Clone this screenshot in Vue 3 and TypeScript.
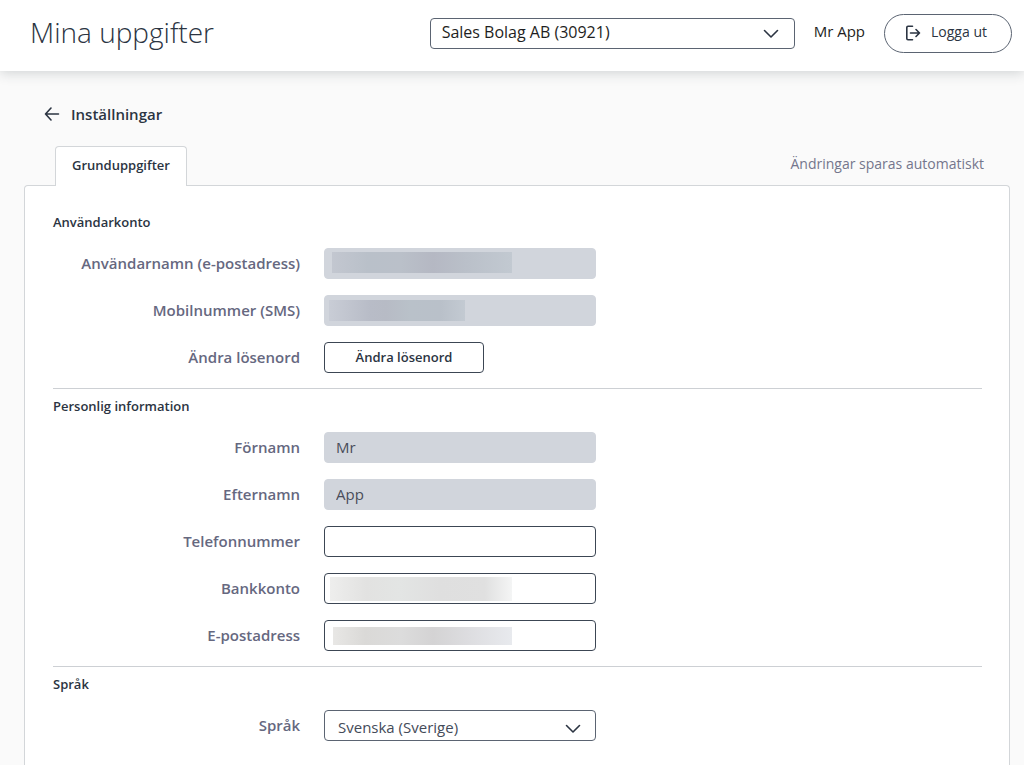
<script setup lang="ts">
import { ref } from 'vue'

interface Field {
  id: string
  label: string
  type: string
  value: string
  disabled?: boolean
  mask?: string
}

const companies = ['Sales Bolag AB (30921)']
const company = ref(companies[0])

const languages = ['Svenska (Sverige)']
const language = ref(languages[0])

const account = ref<Field[]>([
  { id: 'username', label: 'Användarnamn (e-postadress)', type: 'email', value: '', disabled: true, mask: 'mask-username' },
  { id: 'mobile', label: 'Mobilnummer (SMS)', type: 'tel', value: '', disabled: true, mask: 'mask-mobile' },
])

const personal = ref<Field[]>([
  { id: 'firstname', label: 'Förnamn', type: 'text', value: 'Mr', disabled: true },
  { id: 'lastname', label: 'Efternamn', type: 'text', value: 'App', disabled: true },
  { id: 'phone', label: 'Telefonnummer', type: 'tel', value: '' },
  { id: 'bank', label: 'Bankkonto', type: 'text', value: '', mask: 'mask-bank' },
  { id: 'email', label: 'E-postadress', type: 'email', value: '', mask: 'mask-email' },
])
</script>

<template>
  <div class="page">
    <header class="topbar">
      <h1>Mina uppgifter</h1>
      <div class="select company">
        <select v-model="company" aria-label="Bolag">
          <option v-for="c in companies" :key="c">{{ c }}</option>
        </select>
        <svg class="chevron" viewBox="0 0 16 10" aria-hidden="true"><path d="M1.500 1.500 8 8l6.500-6.500" /></svg>
      </div>
      <span class="user">Mr App</span>
      <button class="logout" type="button">
        <svg viewBox="0 0 16 16" aria-hidden="true">
          <path d="M7.500 1.300H3Q1.800 1.300 1.800 2.500v11Q1.800 14.700 3 14.700h4.500M5.500 8h9M11 4.500 14.500 8 11 11.500" />
        </svg>
        <span>Logga ut</span>
      </button>
    </header>

    <main>
      <a class="back" href="#">
        <svg viewBox="0 0 16 14" aria-hidden="true"><path d="M14.500 7H1.500M7 1 1.500 7 7 13" /></svg>
        <span>Inställningar</span>
      </a>

      <div class="tabs">
        <button class="tab" type="button">Grunduppgifter</button>
        <span class="saved">Ändringar sparas automatiskt</span>
      </div>

      <div class="panel">
        <section>
          <h2>Användarkonto</h2>
          <div class="rows">
            <div v-for="f in account" :key="f.id" class="row">
              <label :for="f.id">{{ f.label }}</label>
              <div class="field">
                <input :id="f.id" v-model="f.value" :type="f.type" :disabled="f.disabled" />
                <span v-if="f.mask" class="mask" :class="f.mask"></span>
              </div>
            </div>
            <div class="row">
              <label for="password">Ändra lösenord</label>
              <div class="field">
                <button id="password" class="change" type="button">Ändra lösenord</button>
              </div>
            </div>
          </div>
        </section>

        <section>
          <h2>Personlig information</h2>
          <div class="rows">
            <div v-for="f in personal" :key="f.id" class="row">
              <label :for="f.id">{{ f.label }}</label>
              <div class="field">
                <input :id="f.id" v-model="f.value" :type="f.type" :disabled="f.disabled" />
                <span v-if="f.mask" class="mask" :class="f.mask"></span>
              </div>
            </div>
          </div>
        </section>

        <section>
          <h2>Språk</h2>
          <div class="rows">
            <div class="row">
              <label for="language">Språk</label>
              <div class="field select language">
                <select id="language" v-model="language">
                  <option v-for="l in languages" :key="l">{{ l }}</option>
                </select>
                <svg class="chevron" viewBox="0 0 16 10" aria-hidden="true"><path d="M1.500 1.500 8 8l6.500-6.500" /></svg>
              </div>
            </div>
          </div>
        </section>
      </div>
    </main>
  </div>
</template>

<style>
body {
  background: #fafafa;
}
html {
  scrollbar-width: none;
}
</style>

<style scoped>
.page {
  min-height: 100vh;
  display: flex;
  flex-direction: column;
  background: #fafafa;
  color: #2b3442;
  font-family: "Open Sans", "Noto Sans", sans-serif;
  font-size: 15px;
  line-height: 20px;
}
.page * {
  box-sizing: border-box;
}
button,
input,
select {
  font: inherit;
  color: inherit;
  margin: 0;
}
svg {
  fill: none;
  stroke: #2b3442;
  stroke-width: 1.6;
  stroke-linecap: round;
  stroke-linejoin: round;
}
.topbar {
  display: flex;
  align-items: center;
  height: 71px;
  padding: 0 12px 5px 30px;
  background: #fff;
  box-shadow: 0 2px 12px rgba(40, 55, 60, 0.2);
}
h1 {
  flex: 1;
  margin: 0;
  padding-bottom: 2px;
  font-size: 28px;
  line-height: 36px;
  font-weight: 300;
}
.select {
  position: relative;
}
.company {
  flex: 0 1 365px;
  color: #1e1e22;
}
.company select {
  padding-bottom: 2px;
  font-size: 16px;
}
.select select {
  display: block;
  width: 100%;
  height: 31px;
  padding: 0 36px 2px 11px;
  appearance: none;
  background: #fff;
  border: 1px solid #5b6472;
  border-radius: 4px;
}
.chevron {
  position: absolute;
  right: 16px;
  top: 11px;
  width: 16px;
  height: 10px;
  pointer-events: none;
}
.user {
  margin: 0 19px;
  padding-bottom: 4px;
  color: #1e1e22;
}
.logout {
  display: flex;
  align-items: center;
  justify-content: center;
  gap: 10px;
  width: 128px;
  height: 39px;
  padding: 0 4px 0 0;
  background: #fff;
  border: 1px solid #5b6472;
  border-radius: 20px;
  font-size: 14px;
}
.logout svg {
  width: 16px;
  height: 16px;
}
.logout span {
  padding-bottom: 2px;
}
main {
  flex: 1;
  display: flex;
  flex-direction: column;
  align-items: stretch;
  padding: 33px 14px 0 24px;
}
.back {
  display: flex;
  align-items: center;
  align-self: flex-start;
  gap: 11px;
  margin-left: 20px;
  color: inherit;
  font-weight: 600;
  text-decoration: none;
}
.back svg {
  width: 16px;
  height: 14px;
}
.tabs {
  display: flex;
  align-items: center;
  justify-content: space-between;
  margin: 22px 26px 0 31px;
}
.tab {
  position: relative;
  z-index: 1;
  width: 132px;
  height: 40px;
  margin-bottom: -1px;
  padding: 0 0 3px;
  background: #fff;
  border: 1px solid #d3d6d9;
  border-bottom: 0;
  border-radius: 4px 4px 0 0;
  font-size: 13px;
  font-weight: 600;
}
.saved {
  padding-bottom: 4px;
  font-size: 14px;
  color: #74768c;
}
.panel {
  flex: 1;
  padding: 26px 27px 0 28px;
  background: #fff;
  border: 1px solid #d3d6d9;
  border-bottom: 0;
  border-radius: 4px 4px 0 0;
}
section {
  padding-bottom: 15px;
}
section + section {
  padding-top: 7px;
  border-top: 1px solid #cdd0d4;
}
h2 {
  margin: 0 0 16px;
  font-size: 13px;
  line-height: 20px;
  font-weight: 600;
}
.rows {
  display: grid;
  gap: 16px;
}
.row {
  display: grid;
  grid-template-columns: 247px minmax(0, 272px);
  column-gap: 24px;
  align-items: center;
}
label {
  padding-bottom: 2px;
  text-align: right;
  font-weight: 600;
  color: #66687f;
}
.field {
  position: relative;
  height: 31px;
}
input {
  display: block;
  width: 100%;
  height: 31px;
  padding: 0 11px 2px;
  background: #fff;
  border: 1px solid #3c4654;
  border-radius: 4px;
}
input:disabled {
  background: #d1d5dc;
  border-color: #d1d5dc;
  color: #4a4d5a;
}
.change {
  display: block;
  width: 160px;
  height: 31px;
  padding: 0 0 2px;
  background: #fff;
  border: 1px solid #3c4654;
  border-radius: 4px;
  font-size: 13px;
  font-weight: 600;
}
.language select {
  padding: 3px 36px 0 13px;
  color: #444b59;
}
.language .chevron {
  top: 14px;
  right: 15px;
}
.mask {
  position: absolute;
  pointer-events: none;
}
.mask-username {
  left: 8px;
  top: 4px;
  width: 180px;
  height: 21px;
  background: linear-gradient(90deg, #c3c7d0, #b9c0c9 20%, #bac0c9 38%, #b5b8c3 56%, #bac0c9 75%, #c2c9d1);
}
.mask-mobile {
  left: 5px;
  top: 5px;
  width: 136px;
  height: 21px;
  background: linear-gradient(90deg, #c9cdd6, #b8bcc7 30%, #b7bbc5 42%, #b9c1c9 60%, #b9c0c9 82%, #c3cad2);
}
.mask-bank {
  left: 6px;
  top: 4px;
  width: 182px;
  height: 24px;
  background: linear-gradient(90deg, #eeeeed, #e2e2e1 20%, #e3e5e4 38%, #dfdfdf 60%, #e0e0e0 85%, #f4f5f5);
}
.mask-email {
  left: 9px;
  top: 7px;
  width: 179px;
  height: 18px;
  background: linear-gradient(90deg, #e8e7e5, #dad9d7 18%, #dcdcdc 38%, #d4d3d4 56%, #dddde0 76%, #e8eaee);
}
</style>
